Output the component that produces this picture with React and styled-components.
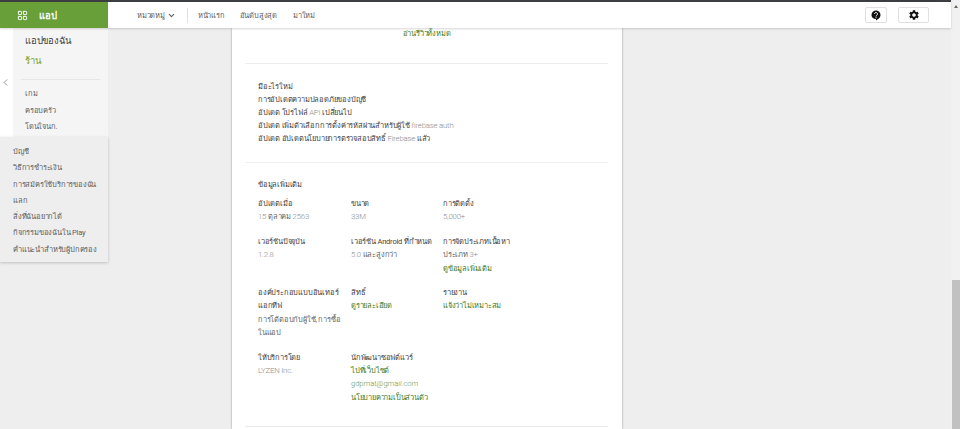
import React from 'react';
import styled, { createGlobalStyle } from 'styled-components';
import { ChevronDown, ChevronLeft, LayoutGrid } from 'lucide-react';
import { MdSettings } from 'react-icons/md';

const GlobalStyle = createGlobalStyle`
  html, body {
    margin: 0;
    height: 100%;
    overflow: hidden;
    background: #eeeeee;
    font-family: Roboto, "Noto Sans", "Open Sans", sans-serif;
    letter-spacing: -0.2px;
  }
`;

const Page = styled.div`
  display: flex;
  height: 429px;
  width: 960px;
  overflow: hidden;
`;

const Main = styled.div`
  width: 951px;
  display: flex;
  flex-direction: column;
`;

const TopBar = styled.header`
  height: 26px;
  flex: none;
  border-top: 2px solid #3b3d40;
  background: #fff;
  display: flex;
  align-items: center;
  box-shadow: 0 1px 2px rgba(0, 0, 0, 0.16);
  position: relative;
  z-index: 3;
`;

const Brand = styled.div`
  width: 108px;
  height: 100%;
  background: #689f38;
  color: #fff;
  display: flex;
  align-items: center;
  gap: 11px;
  padding-left: 17px;
  box-sizing: border-box;
  font-size: 9.5px;
  font-weight: 700;
`;

const Nav = styled.nav`
  display: flex;
  align-items: center;
  flex: 1;
  padding-left: 29px;
  font-size: 7.5px;
  color: #616161;
`;

const NavItem = styled.span`
  margin-right: ${props => props.$gap}px;
  display: flex;
  align-items: center;
  gap: 2px;
`;

const NavSep = styled.span`
  width: 1px;
  height: 15px;
  background: #e0e0e0;
  margin-right: 10px;
`;

const Tools = styled.div`
  display: flex;
  gap: 11px;
  padding-right: 22px;
`;

const ToolButton = styled.button`
  width: ${props => props.$wide}px;
  height: 16px;
  padding: 0;
  background: #fff;
  border: 1px solid #e0e0e0;
  border-radius: 2px;
  display: flex;
  align-items: center;
  justify-content: center;
  color: #111;
`;

const Body = styled.div`
  flex: 1;
  display: flex;
  min-height: 0;
`;

const Sidebar = styled.aside`
  width: 108px;
  flex: none;
  display: flex;
  flex-direction: column;
  align-items: stretch;
`;

const Upper = styled.div`
  display: flex;
  height: 109px;
  background: #fff;
`;

const Rail = styled.div`
  width: 13px;
  flex: none;
  display: flex;
  align-items: center;
  color: #616161;
`;

const UpperPanel = styled.div`
  flex: 1;
  background: #f5f5f5;
  padding: 6px 8px 0 8px;
`;

const MyApps = styled.div`
  font-size: 9.5px;
  line-height: 14px;
  padding: 0 4px;
  margin-bottom: 6px;
  color: #424242;
`;

const Store = styled(MyApps)`
  color: #7c9f2e;
  margin-bottom: 11px;
`;

const SideRule = styled.div`
  height: 1px;
  background: #e6e6e6;
  margin-bottom: 6px;
`;

const SubLink = styled.div`
  font-size: 7.5px;
  line-height: 16.5px;
  padding: 0 4px;
  color: #616161;
`;

const LowerPanel = styled.div`
  background: #eeeeee;
  padding: 7px 0 4px 13px;
  box-shadow: 0 1px 3px rgba(0, 0, 0, 0.2);
  position: relative;
`;

const LowerLink = styled.div`
  font-size: 7.5px;
  line-height: 16.3px;
  color: #616161;
  white-space: nowrap;
`;

const Content = styled.main`
  flex: 1;
  min-width: 0;
  padding-left: 124px;
`;

const Card = styled.div`
  width: 390px;
  height: 100%;
  box-sizing: border-box;
  background: #fff;
  box-shadow: 0 0 2px rgba(0, 0, 0, 0.4);
  padding: 0 14px 0 13px;
`;

const ReadAll = styled.div`
  color: #3f7a25;
  font-size: 7.5px;
  line-height: 11px;
  text-align: center;
  height: 35px;
  border-bottom: 1px solid #eeeeee;
`;

const WhatsNew = styled.section`
  height: 99px;
  box-sizing: border-box;
  padding: 16px 13px 0;
  border-bottom: 1px solid #eeeeee;
`;

const Line = styled.div`
  font-size: 7.5px;
  line-height: 13px;
  color: #424242;
  white-space: nowrap;
`;

const Latin = styled.span`
  color: #8c8c8c;
  font-size: 7.8px;
  font-weight: 300;
`;

const MoreInfo = styled.section`
  height: 264px;
  box-sizing: border-box;
  padding: 15px 13px 0;
  border-bottom: 1px solid #e8e8e8;
`;

const MoreTitle = styled.div`
  font-size: 7.5px;
  line-height: 13px;
  color: #424242;
  margin-bottom: 6px;
`;

const InfoGrid = styled.div`
  display: grid;
  grid-template-columns: 93px 92px 140px;
  row-gap: 11px;
`;

const Label = styled.div`
  font-size: 7.5px;
  line-height: 13.4px;
  color: #424242;
  white-space: nowrap;
`;

const Value = styled(Label)`
  color: #666666;
`;

const FieldLink = styled(Label)`
  color: #3f7a25;
`;

const EmailLink = styled(FieldLink)`
  color: #5f9650;
  letter-spacing: 0;
  font-weight: 300;
`;

const Scrollbar = styled.div`
  width: 9px;
  flex: none;
  background: #f1f1f1;
  display: flex;
  flex-direction: column;
  padding-left: 1px;
  box-sizing: border-box;
`;

const ScrollArrow = styled.div`
  width: 0;
  height: 0;
  margin: 5px 0 0 2px;
  border-left: 2.5px solid transparent;
  border-right: 2.5px solid transparent;
  border-bottom: 3px solid #666;
`;

const ScrollThumb = styled.div`
  margin-top: auto;
  height: 149px;
  background: #c1c1c1;
`;

const HelpIcon = () => (
  <svg width="10" height="11" viewBox="0 0 20 22" aria-hidden="true">
    <path d="M10 1a9 9 0 0 1 9 9c0 5-4 8-9 11v-3a8 8 0 0 1-9-8 9 9 0 0 1 9-9z" fill="#111" />
    <path d="M7 8a3 3 0 1 1 4.6 2.5C10.6 11.2 10 11.700 10 13" fill="none" stroke="#fff" strokeWidth="2" />
    <rect x="9" y="14.500" width="2" height="2" fill="#fff" />
  </svg>
);

const subLinks = ['เกม', 'ครอบครัว', 'โดนใจนก.'];
const accountLinks = [
  'บัญชี',
  'วิธีการชำระเงิน',
  'การสมัครใช้บริการของฉัน',
  'แลก',
  'สิ่งที่ฉันอยากได้',
  'กิจกรรมของฉันใน Play',
  'คำแนะนำสำหรับผู้ปกครอง'
];

export default function App() {
  return (
    <Page>
      <GlobalStyle />
      <Main>
        <TopBar>
          <Brand>
            <LayoutGrid size={11} strokeWidth={2} />
            แอป
          </Brand>
          <Nav>
            <NavItem $gap={11}>
              หมวดหมู่ <ChevronDown size={9} strokeWidth={3} />
            </NavItem>
            <NavSep />
            <NavItem $gap={15}>หน้าแรก</NavItem>
            <NavItem $gap={16}>อันดับสูงสุด</NavItem>
            <NavItem $gap={0}>มาใหม่</NavItem>
          </Nav>
          <Tools>
            <ToolButton $wide={22}>
              <HelpIcon />
            </ToolButton>
            <ToolButton $wide={31}>
              <MdSettings size={12} />
            </ToolButton>
          </Tools>
        </TopBar>
        <Body>
          <Sidebar>
            <Upper>
              <Rail>
                <ChevronLeft size={11} strokeWidth={1.5} />
              </Rail>
              <UpperPanel>
                <MyApps>แอปของฉัน</MyApps>
                <Store>ร้าน</Store>
                <SideRule />
                {subLinks.map(link => (
                  <SubLink key={link}>{link}</SubLink>
                ))}
              </UpperPanel>
            </Upper>
            <LowerPanel>
              {accountLinks.map(link => (
                <LowerLink key={link}>{link}</LowerLink>
              ))}
            </LowerPanel>
          </Sidebar>
          <Content>
            <Card>
              <ReadAll>อ่านรีวิวทั้งหมด</ReadAll>
              <WhatsNew>
                <Line>มีอะไรใหม่</Line>
                <Line>การอัปเดตความปลอดภัยของบัญชี</Line>
                <Line>
                  อัปเดต โปรไฟล์ <Latin>API</Latin> เปลี่ยนไป
                </Line>
                <Line>
                  อัปเดต เพิ่มตัวเลือกการตั้งค่ารหัสผ่านสำหรับผู้ใช้ <Latin>firebase auth</Latin>
                </Line>
                <Line>
                  อัปเดต อัปเดตนโยบายการตรวจสอบสิทธิ์ <Latin>Firebase</Latin> แล้ว
                </Line>
              </WhatsNew>
              <MoreInfo>
                <MoreTitle>ข้อมูลเพิ่มเติม</MoreTitle>
                <InfoGrid>
                  <div>
                    <Label>อัปเดตเมื่อ</Label>
                    <Value>
                      <Latin>15</Latin> ตุลาคม <Latin>2563</Latin>
                    </Value>
                  </div>
                  <div>
                    <Label>ขนาด</Label>
                    <Value>
                      <Latin>33M</Latin>
                    </Value>
                  </div>
                  <div>
                    <Label>การติดตั้ง</Label>
                    <Value>
                      <Latin>5,000+</Latin>
                    </Value>
                  </div>
                  <div>
                    <Label>เวอร์ชันปัจจุบัน</Label>
                    <Value>
                      <Latin>1.2.8</Latin>
                    </Value>
                  </div>
                  <div>
                    <Label>เวอร์ชัน Android ที่กำหนด</Label>
                    <Value>
                      <Latin>5.0</Latin> และสูงกว่า
                    </Value>
                  </div>
                  <div>
                    <Label>การจัดประเภทเนื้อหา</Label>
                    <Value>
                      ประเภท <Latin>3+</Latin>
                    </Value>
                    <FieldLink>ดูข้อมูลเพิ่มเติม</FieldLink>
                  </div>
                  <div>
                    <Label>
                      องค์ประกอบแบบอินเทอร์
                      <br />
                      แอกทีฟ
                    </Label>
                    <Value>
                      การโต้ตอบกับผู้ใช้, การซื้อ
                      <br />
                      ในแอป
                    </Value>
                  </div>
                  <div>
                    <Label>สิทธิ์</Label>
                    <FieldLink>ดูรายละเอียด</FieldLink>
                  </div>
                  <div>
                    <Label>รายงาน</Label>
                    <FieldLink>แจ้งว่าไม่เหมาะสม</FieldLink>
                  </div>
                  <div>
                    <Label>ให้บริการโดย</Label>
                    <Value>
                      <Latin>LYZEN Inc.</Latin>
                    </Value>
                  </div>
                  <div>
                    <Label>นักพัฒนาซอฟต์แวร์</Label>
                    <FieldLink>ไปที่เว็บไซต์</FieldLink>
                    <EmailLink>gdpmat@gmail.com</EmailLink>
                    <FieldLink>นโยบายความเป็นส่วนตัว</FieldLink>
                  </div>
                </InfoGrid>
              </MoreInfo>
            </Card>
          </Content>
        </Body>
      </Main>
      <Scrollbar>
        <ScrollArrow />
        <ScrollThumb />
      </Scrollbar>
    </Page>
  );
}
